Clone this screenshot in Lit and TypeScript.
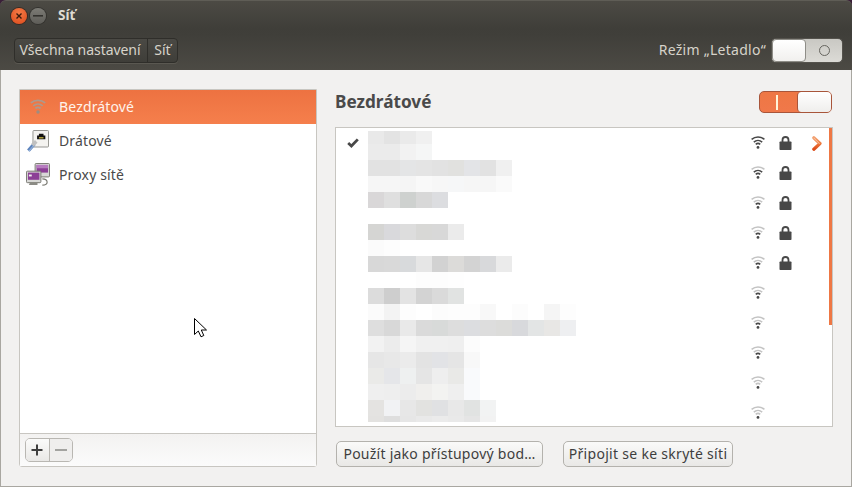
import { LitElement, html, css, svg } from "lit";
import { customElement } from "lit/decorators.js";

const MOSAIC: { h: number; tiles: string[] }[] = [
  { h: 13, tiles: ["e9e9e9", "e3e3e3", "eaeaea", "f0f0f0"] },
  { h: 16, tiles: ["ebebeb", "ebebeb", "f2f2f2", "f5f6f6"] },
  { h: 16, tiles: ["e2e2e2", "e2e2e2", "e4e5e6", "e4e4e4", "e2e2e2", "e1e1df", "e3e4e7", "e2e2e2", "f0f0f0"] },
  { h: 16, tiles: ["f6f6f6", "f6f6f6", "f5f5f5", "f9f9f9", "f7f7f7", "f6f7f8", "f6f6f6", "f6f6f6", "fafafa"] },
  { h: 16, tiles: ["d9d7d8", "dfdfdf", "ced1cf", "d8d8d8", "dcdde0"] },
  { h: 16, tiles: [] },
  { h: 16, tiles: ["d5d5d3", "d9d9dc", "dddddd", "d8d8d6", "d8d8d8", "ebebeb"] },
  { h: 16, tiles: ["fbfbfb", "fdfdfd"] },
  { h: 16, tiles: ["d8d8d8", "d9d9d9", "d8dadc", "e6e6e6", "d2d2d2", "dcdbd9", "d3d3d3", "d8d9db", "ebebeb"] },
  { h: 16, tiles: ["ffffff", "ffffff", "ffffff", "fdfdfd", "fdfdfd", "fefefe"] },
  { h: 16, tiles: ["dcdcdc", "cecece", "e3e3e3", "d3d3d3", "dadada", "e1e3e2"] },
  { h: 16, tiles: ["fbfbfb", "f3f3f3", "fdfdfd", "ffffff", "fcfcfc", "fdfdfd", "fdfdfd", "f8f8f8", "ffffff", "fcfcfc", "ffffff", "f5f5f5", "fdfdfd"] },
  { h: 16, tiles: ["dedede", "d8d8d8", "e9e9e9", "dadada", "d8dad9", "dddddd", "dcdde0", "dddddd", "dcdcda", "d8d9dc", "e3e5e5", "e8e7e5", "eeeff1"] },
  { h: 16, tiles: ["f2f2f2", "ececec", "f5f5f5", "f0f0f0", "f0f0f0", "efefef", "fcfcfc"] },
  { h: 16, tiles: ["e6e6e6", "e8e8e8", "ebebeb", "e3e3e3", "e2e3e6", "e5e5e5", "f8f8f8"] },
  { h: 16, tiles: ["eaeae8", "e5e6e9", "eef0f0", "e5e5e5", "eeeeee", "e9e9e7", "f9fafc"] },
  { h: 16, tiles: ["efefef", "eeeeee", "ececec", "f0efed", "f3f3f1", "efefef", "f9fafc"] },
  { h: 16, tiles: ["e4e3e1", "f1f2f4", "e7e7e7", "e2e2e0", "e0e1e3", "e8e8e8", "e1e3e2", "f2f3f3"] },
  { h: 6, tiles: ["e3e2e0", "dedede", "e6e6e6", "e9e9e9", "ebebeb", "e9e9e9", "e5e5e5", "f2f2f2"] },
];

const NETWORKS = [
  { level: 3, lock: true, check: true, active: true },
  { level: 2, lock: true },
  { level: 1, lock: true },
  { level: 1, lock: true },
  { level: 1, lock: true },
  { level: 1 },
  { level: 1 },
  { level: 1 },
  { level: 0 },
  { level: 0 },
] as { level: number; lock?: boolean; check?: boolean; active?: boolean }[];

const DARK = "#484848";
const GRAY = "#c4c4c4";

function wifi(level: number) {
  const c = (n: number) => (level >= n ? DARK : GRAY);
  return html`<svg class="wifi" width="16" height="14" viewBox="0 0 16 14" fill="none" stroke-width="1.6">
    <path d="M1.6 3.34A10 10 0 0 1 14.4 3.34" stroke=${c(3)} />
    <path d="M3.82 6.02A6.5 6.5 0 0 1 12.18 6.02" stroke=${c(2)} />
    <path d="M5.75 8.32A3.5 3.5 0 0 1 10.25 8.32" stroke=${c(1)} />
    <circle cx="8" cy="11.4" r="1.4" fill=${DARK} stroke="none" />
  </svg>`;
}

const lock = html`<svg class="lock" width="13" height="14" viewBox="0 0 13 14">
  <path d="M3.5 6V4a3 3 0 0 1 6 0v2" fill="none" stroke="#484848" stroke-width="1.8" />
  <rect x="0.500" y="5.500" width="12" height="8.500" rx="0.800" fill="#484848" />
</svg>`;

const chevron = html`<svg width="10" height="15" viewBox="0 0 10 15" fill="none">
  <defs><linearGradient id="chev" x1="0" y1="0" x2="0" y2="1">
    <stop offset="0" stop-color="#f2a070" /><stop offset="0.5" stop-color="#ee7a3e" /><stop offset="1" stop-color="#dc4a17" />
  </linearGradient></defs>
  <path d="M1.800 1.800 8 7.500 1.800 13.200" stroke="url(#chev)" stroke-width="3.200" stroke-linecap="round" stroke-linejoin="round" />
  <path d="M2 2.200 7.200 7.500" stroke="#f9c7a6" stroke-width="1" stroke-linecap="round" />
</svg>`;

const check = html`<svg width="12" height="10" viewBox="0 0 12 10" fill="none">
  <path d="M1.200 5 4.400 8 10.800 1.400" stroke="#484848" stroke-width="2.800" />
</svg>`;

const wiredIcon = html`<svg width="22" height="23" viewBox="0 0 24 25">
  <rect x="6.500" y="0.500" width="17" height="18" rx="1" fill="#f4f3f0" stroke="#8c8c88" />
  <path d="M11 10V6h2V4h5v2h2v4z" fill="#111" />
  <path d="M13 8.500h5" stroke="#e8d44a" stroke-width="1.200" />
  <path d="M8 15 1.500 22.500" stroke="#5d84bd" stroke-width="3.800" />
  <path d="M8.500 15.500 2 23" stroke="#a9c2e4" stroke-width="1" />
  <rect x="5" y="12.500" width="6" height="4" fill="#c0c0c0" transform="rotate(-45 8 14.500)" />
</svg>`;

const proxyIcon = html`<svg width="24" height="24" viewBox="0 0 25 25">
  <rect x="9.500" y="0.500" width="15" height="14" rx="1" fill="#d8d8d6" stroke="#76766f" />
  <rect x="11" y="2" width="12" height="8" fill="#8c3f96" />
  <rect x="11" y="2" width="12" height="3.500" fill="#b77cc0" />
  <rect x="0.500" y="8.500" width="15" height="12" rx="1" fill="#d8d8d6" stroke="#76766f" />
  <rect x="2" y="10" width="12" height="7.500" fill="#8c3f96" />
  <rect x="3" y="12" width="3" height="2" fill="#eee" />
  <path d="M4 20.500h8V23H3z" fill="#8b8b85" />
  <path d="M17 16.500c3 0 5 1.500 5 3.500s-2 3-5 3" fill="none" stroke="#77776f" stroke-width="1.200" />
</svg>`;

const sideWifi = svg`<svg width="18" height="16" viewBox="0 0 16 14" fill="none" stroke-width="1.600" stroke="#ad9a8d">
  <path d="M1.600 3.340A10 10 0 0 1 14.400 3.340" />
  <path d="M3.820 6.020A6.500 6.500 0 0 1 12.180 6.020" />
  <path d="M5.750 8.320A3.500 3.500 0 0 1 10.250 8.320" />
  <circle cx="8" cy="11.400" r="1.500" fill="#9c8d82" stroke="none" />
</svg>`;

@customElement("app-root")
export class AppRoot extends LitElement {
  static styles = css`
    :host {
      display: block;
      width: 852px;
      height: 487px;
      background: #3a1f38;
      font-family: "Noto Sans", "Open Sans", sans-serif;
      font-size: 14px;
      color: #4a4a4a;
      overflow: hidden;
    }
    * { box-sizing: border-box; }
    .window { display: flex; flex-direction: column; height: 487px; position: relative; }
    .chrome {
      height: 70px;
      flex: none;
      border-radius: 6px 6px 0 0;
      background: linear-gradient(#4c4a44, #3f3e39 40%, #403f3a 50%, #4c4a44);
      border-top: 1px solid #5f5d56;
    }
    .titlebar { height: 29px; display: flex; align-items: center; padding-left: 11px; }
    .dot { width: 16px; height: 16px; border-radius: 50%; display: flex; align-items: center; justify-content: center; }
    .dot.close { background: radial-gradient(circle at 50% 30%, #f47a45, #dc4a1b); box-shadow: 0 0 0 1px #3a2a22; }
    .dot.min { background: linear-gradient(#7c7b75, #5e5d58); margin-left: 3px; box-shadow: 0 0 0 1px #33322e; }
    .wintitle { margin-left: 12px; font-weight: 700; font-size: 13.500px; color: #dfdbd2; padding-bottom: 2px; }
    .toolbar { height: 40px; display: flex; align-items: center; justify-content: space-between; padding: 0 9px 0 14px; }
    .crumbs {
      display: flex; height: 25px; border: 1px solid #2f2e2a; border-radius: 4px;
      background: linear-gradient(#4a4944, #3f3e39);
      color: #d7d3ca; font-size: 14px; align-items: center;
      box-shadow: 0 1px 0 #5a5851;
    }
    .crumb { height: 100%; display: flex; align-items: center; padding: 0 0 2px; }
    .crumb.first { width: 133px; border-right: 1px solid #2f2e2a; justify-content: center; padding-right: 2px; letter-spacing: -0.050px; }
    .crumb.last { width: 29px; justify-content: center; }
    .air { display: flex; align-items: center; gap: 5px; color: #d7d3ca; font-size: 14px; letter-spacing: 0.280px; }
    .airlabel { padding-bottom: 2px; }
    .airswitch {
      width: 72px; height: 25px; border-radius: 5px; background: linear-gradient(#c9c8c3, #dcdbd6);
      border: 1px solid #55534d; display: flex; align-items: center;
    }
    .airknob { width: 34px; height: 23px; border-radius: 4px; background: linear-gradient(#fff, #f1f0ee); border: 1px solid #8e8d87; }
    .ring { width: 11px; height: 11px; border-radius: 50%; border: 1px solid #66655f; margin-left: 13px; }
    .body {
      flex: 1; background: #f2f1f0; display: flex; gap: 18px;
      padding: 19px 18px 19px 18px; border: 1px solid #a9a7a1; border-top: 0;
    }
    .side { flex: 1; display: flex; flex-direction: column; border: 1px solid #c8c6c1; border-radius: 0 0 3px 3px; background: #fff; min-width: 0; }
    .sidelist { flex: 1; }
    .sitem { height: 34px; display: flex; align-items: center; font-size: 14px; color: #4a4a4a; letter-spacing: 0.150px; }
    .stext { padding-bottom: 2px; }
    .sitem.sel { background: linear-gradient(#ed7241, #f57f4c); color: #fff3ec; }
    .sicon { width: 39px; display: flex; justify-content: flex-start; }
    .sicon.w { padding-left: 9px; }
    .sicon.d { padding-left: 7px; }
    .sicon.p { padding-left: 6px; }
    .sidetools {
      height: 33px; flex: none; border-top: 1px solid #c8c6c1; padding: 4px 5px;
      background: linear-gradient(#f3f2f1, #fbfbfb);
    }
    .addrem { display: flex; width: 48px; height: 24px; border: 1px solid #b9b7b2; border-radius: 5px; overflow: hidden; }
    .addrem div { flex: 1; display: flex; align-items: center; justify-content: center; }
    .add { background: linear-gradient(#fbfbfa, #e9e8e6); border-right: 1px solid #b9b7b2; }
    .rem { background: #efeeed; }
    .main { width: 498px; flex: none; display: flex; flex-direction: column; }
    .head { height: 38px; flex: none; display: flex; justify-content: space-between; padding: 2px 1px 0 0; }
    h1 { margin: -1px 0 0; font-size: 17.200px; font-weight: 700; color: #4a4a4a; line-height: 24px; }
    .onswitch {
      width: 73px; height: 22px; border-radius: 5px; border: 1px solid #a8553a;
      background: linear-gradient(#ee7744, #f0784a); display: flex; align-items: center; justify-content: space-between;
    }
    .bar { width: 2px; height: 15px; background: #fff4d8; margin-left: 16px; }
    .onknob { width: 34px; height: 20px; border-radius: 4px; background: linear-gradient(#fff, #efeeec); border-left: 1px solid #a8553a; }
    .box {
      height: 300px; flex: none; border: 1px solid #c8c6c1; background: #fff;
      display: grid; grid-template-columns: 1fr; overflow: hidden;
    }
    .layer { grid-area: 1 / 1; min-width: 0; height: 298px; overflow: hidden; }
    .mosaic { padding: 3px 0 0 32px; }
    .mrow { display: flex; }
    .tile { width: 16px; height: 100%; flex: none; }
    .nrow {
      height: 30px; display: grid; align-items: center; padding-left: 11px;
      grid-template-columns: 12px 1fr 16px 26px 30px 10px;
    }
    .nrow > * { display: flex; align-items: center; }
    .wifi, .lock { display: block; flex: none; }
    .nrow .c-lock { margin-left: 13px; }
    .nrow .c-chev { margin-left: 20px; }
    .scroll { justify-self: end; width: 3px; height: 197px; background: #ee7744; }
    .actions { flex: 1; display: flex; gap: 20px; align-items: flex-start; padding: 14px 0 0 1px; }
    .btn {
      height: 26px; border: 1px solid #b4b2ad; border-radius: 5px; background: linear-gradient(#fafaf9, #e9e8e6);
      font: inherit; font-size: 14px; color: #3e3e3e; padding: 0 0 2px; display: flex; align-items: center; justify-content: center;
      white-space: nowrap;
    }
    .b1 { width: 207px; letter-spacing: 0.250px; }
    .b2 { width: 170px; letter-spacing: 0.300px; }
    .cursor { position: absolute; left: 194px; top: 318px; }
  `;

  render() {
    return html`<div class="window">
      <div class="chrome">
        <div class="titlebar">
          <div class="dot close"><svg width="8" height="8" viewBox="0 0 8 8"><path d="M1.500 1.500l5 5M6.500 1.500l-5 5" stroke="#3a1a0c" stroke-width="1.400" /></svg></div>
          <div class="dot min"><svg width="10" height="2" viewBox="0 0 10 2"><rect width="10" height="1.600" fill="#33322e" /></svg></div>
          <span class="wintitle">Síť</span>
        </div>
        <div class="toolbar">
          <div class="crumbs"><span class="crumb first">Všechna nastavení</span><span class="crumb last">Síť</span></div>
          <div class="air">
            <span class="airlabel">Režim „Letadlo“</span>
            <div class="airswitch"><div class="airknob"></div><div class="ring"></div></div>
          </div>
        </div>
      </div>
      <div class="body">
        <div class="side">
          <div class="sidelist">
            <div class="sitem sel"><span class="sicon w">${sideWifi}</span><span class="stext">Bezdrátové</span></div>
            <div class="sitem"><span class="sicon d">${wiredIcon}</span><span class="stext">Drátové</span></div>
            <div class="sitem"><span class="sicon p">${proxyIcon}</span><span class="stext">Proxy sítě</span></div>
          </div>
          <div class="sidetools">
            <div class="addrem">
              <div class="add"><svg width="12" height="12" viewBox="0 0 12 12"><path d="M6 0.500v11M0.500 6h11" stroke="#3f3f3f" stroke-width="2" /></svg></div>
              <div class="rem"><svg width="12" height="2" viewBox="0 0 12 2"><rect width="12" height="2" fill="#a3a3a0" /></svg></div>
            </div>
          </div>
        </div>
        <div class="main">
          <div class="head">
            <h1>Bezdrátové</h1>
            <div class="onswitch"><div class="bar"></div><div class="onknob"></div></div>
          </div>
          <div class="box">
            <div class="layer mosaic">
              ${MOSAIC.map(
                (r) => html`<div class="mrow" style="height:${r.h}px">
                  ${r.tiles.map((t) => html`<div class="tile" style="background:#${t}"></div>`)}
                </div>`
              )}
            </div>
            <div class="layer">
              ${NETWORKS.map(
                (n) => html`<div class="nrow">
                  <span>${n.check ? check : ""}</span>
                  <span></span>
                  <span>${wifi(n.level)}</span>
                  <span class="c-lock">${n.lock ? lock : ""}</span>
                  <span class="c-chev">${n.active ? chevron : ""}</span>
                  <span></span>
                </div>`
              )}
            </div>
            <div class="layer scroll"></div>
          </div>
          <div class="actions">
            <button class="btn b1">Použít jako přístupový bod…</button>
            <button class="btn b2">Připojit se ke skryté síti</button>
          </div>
        </div>
      </div>
      <svg class="cursor" width="14" height="20" viewBox="0 0 14 20">
        <path d="M0.500 0.500V16.500L4.300 13 7 18.800 9.800 17.500 7.300 12H12.500Z" fill="#fff" stroke="#000" stroke-width="1" stroke-linejoin="round" />
      </svg>
    </div>`;
  }
}
